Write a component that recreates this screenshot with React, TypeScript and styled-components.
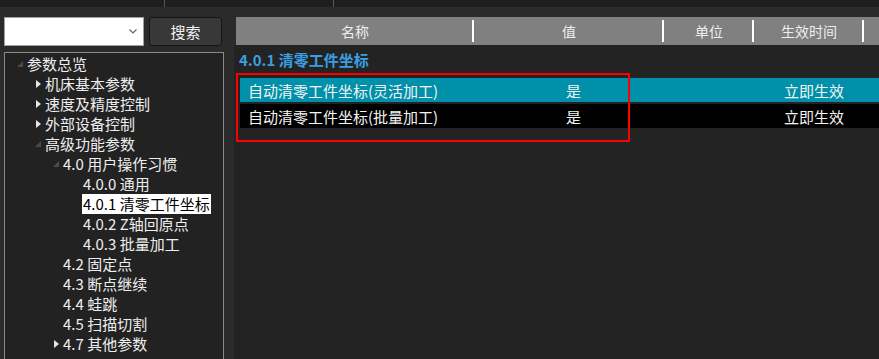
import * as React from 'react';
import styled, { createGlobalStyle } from 'styled-components';

const GlobalStyle = createGlobalStyle`
  html, body {
    margin: 0;
    padding: 0;
    background: #2b2b2b;
    font-family: "Noto Sans CJK SC", "Noto Sans", sans-serif;
    overflow: hidden;
  }
`;

const indents = [0, 18, 36, 56];

const Page = styled.div`
  width: 879px;
  height: 359px;
  display: flex;
  flex-direction: column;
  background: #2b2b2b;
  overflow: hidden;
`;

const TopStrip = styled.div`
  height: 7px;
  flex-shrink: 0;
  background: #1e1e1e;
  display: flex;
`;

const TopCell = styled.div<{ $w: number }>`
  width: ${p => p.$w}px;
  border-right: 1px solid #555;
`;

const Body = styled.div`
  flex: 1;
  display: flex;
  min-height: 0;
`;

const LeftPanel = styled.div`
  width: 234px;
  flex-shrink: 0;
  padding: 10px 0 0 4px;
  box-sizing: border-box;
  display: flex;
  flex-direction: column;
  gap: 6px;
`;

const SearchRow = styled.div`
  display: flex;
  gap: 5px;
  height: 29px;
`;

const Combo = styled.div`
  width: 140px;
  box-sizing: border-box;
  background: #fff;
  border: 1px solid #a0a0a0;
  display: flex;
  align-items: center;
  justify-content: flex-end;
  padding-right: 6px;
  color: #777;
`;

const SearchButton = styled.div`
  width: 73px;
  box-sizing: border-box;
  background: #383838;
  border: 1px solid #151515;
  border-radius: 3px;
  color: #f2f2f2;
  font-size: 15px;
  display: flex;
  align-items: center;
  justify-content: center;
`;

const TreeBox = styled.div`
  width: 220px;
  flex: 1;
  box-sizing: border-box;
  background: #222;
  border: 1px solid #8a8a8a;
  border-bottom: none;
  padding-top: 1px;
`;

const TreeRow = styled.div<{ $level: number }>`
  display: flex;
  align-items: center;
  height: 20px;
  padding-left: ${p => 9 + indents[p.$level]}px;
`;

const Expander = styled.span`
  width: 12px;
  height: 20px;
  flex-shrink: 0;
  display: flex;
  align-items: center;
  justify-content: center;
`;

const TreeLabel = styled.span<{ $selected?: boolean }>`
  font-size: 15px;
  line-height: 20px;
  white-space: nowrap;
  color: ${p => (p.$selected ? '#000' : '#eee')};
  background: ${p => (p.$selected ? '#fff' : 'transparent')};
  padding: 0 1px;
`;

const RightPanel = styled.div`
  flex: 1;
  padding-top: 10px;
  display: flex;
  flex-direction: column;
`;

const HeaderBar = styled.div`
  height: 28px;
  margin-left: 2px;
  background: #808080;
  display: flex;
  flex-shrink: 0;
`;

const HeaderCell = styled.div<{ $w: number }>`
  width: ${p => p.$w}px;
  flex-shrink: 0;
  display: flex;
  align-items: center;
  justify-content: center;
  color: #eee;
  font-size: 14px;
  position: relative;
  &::after {
    content: '';
    position: absolute;
    right: 0;
    top: 3px;
    bottom: 3px;
    width: 2px;
    background: #fff;
  }
`;

const Content = styled.div`
  flex: 1;
  background: #232323;
  padding: 5px 0 0 4px;
  position: relative;
`;

const GroupTitle = styled.div`
  color: #3a9ee0;
  font-weight: bold;
  font-size: 15px;
  line-height: 20px;
  height: 20px;
  padding-left: 1px;
`;

const Rows = styled.div`
  margin-top: 8px;
  margin-left: 2px;
  display: flex;
  flex-direction: column;
  gap: 2px;
`;

const Row = styled.div<{ $active?: boolean }>`
  height: 24px;
  display: flex;
  align-items: center;
  background: ${p => (p.$active ? '#0090a9' : '#000')};
  color: #f4f4f4;
  font-size: 15px;
`;

const Cell = styled.div<{ $w: number; $pad?: number }>`
  width: ${p => p.$w}px;
  padding-left: ${p => p.$pad ?? 0}px;
  box-sizing: border-box;
  flex-shrink: 0;
  white-space: nowrap;
`;

const Highlight = styled.div`
  position: absolute;
  left: 2px;
  top: 28px;
  width: 394px;
  height: 69px;
  box-sizing: border-box;
  border: 2px solid #f00;
  pointer-events: none;
`;

const Collapsed = () => (
  <svg width="5" height="8" viewBox="0 0 5 8">
    <path d="M0 0 L5 4 L0 8 Z" fill="#e6e6e6" />
  </svg>
);

const Expanded = () => (
  <svg width="6" height="6" viewBox="0 0 6 6">
    <path d="M6 0 L6 6 L0 6 Z" fill="#4a4a4a" />
  </svg>
);

type Node = { label: string; level: number; state?: 'open' | 'closed'; selected?: boolean };

const tree: Node[] = [
  { label: '参数总览', level: 0, state: 'open' },
  { label: '机床基本参数', level: 1, state: 'closed' },
  { label: '速度及精度控制', level: 1, state: 'closed' },
  { label: '外部设备控制', level: 1, state: 'closed' },
  { label: '高级功能参数', level: 1, state: 'open' },
  { label: '4.0 用户操作习惯', level: 2, state: 'open' },
  { label: '4.0.0 通用', level: 3 },
  { label: '4.0.1 清零工件坐标', level: 3, selected: true },
  { label: '4.0.2 Z轴回原点', level: 3 },
  { label: '4.0.3 批量加工', level: 3 },
  { label: '4.2 固定点', level: 2 },
  { label: '4.3 断点继续', level: 2 },
  { label: '4.4 蛙跳', level: 2 },
  { label: '4.5 扫描切割', level: 2 },
  { label: '4.7 其他参数', level: 2, state: 'closed' },
];

const columns = [
  { title: '名称', w: 238 },
  { title: '值', w: 190 },
  { title: '单位', w: 90 },
  { title: '生效时间', w: 110 },
];

const params = [
  { name: '自动清零工件坐标(灵活加工)', value: '是', when: '立即生效' },
  { name: '自动清零工件坐标(批量加工)', value: '是', when: '立即生效' },
];

export default function App() {
  return (
    <Page>
      <GlobalStyle />
      <TopStrip>
        <TopCell $w={164} />
        <TopCell $w={168} />
      </TopStrip>
      <Body>
        <LeftPanel>
          <SearchRow>
            <Combo>
              <svg width="8" height="5" viewBox="0 0 8 5">
                <path d="M0.5 0.5 L4 4 L7.5 0.5" stroke="#666" strokeWidth="1.2" fill="none" />
              </svg>
            </Combo>
            <SearchButton>搜索</SearchButton>
          </SearchRow>
          <TreeBox>
            {tree.map(n => (
              <TreeRow key={n.label} $level={n.level}>
                <Expander>
                  {n.state === 'open' ? <Expanded /> : n.state === 'closed' ? <Collapsed /> : null}
                </Expander>
                <TreeLabel $selected={n.selected}>{n.label}</TreeLabel>
              </TreeRow>
            ))}
          </TreeBox>
        </LeftPanel>
        <RightPanel>
          <HeaderBar>
            {columns.map(c => (
              <HeaderCell key={c.title} $w={c.w}>{c.title}</HeaderCell>
            ))}
          </HeaderBar>
          <Content>
            <GroupTitle>4.0.1 清零工件坐标</GroupTitle>
            <Rows>
              {params.map((p, i) => (
                <Row key={p.name} $active={i === 0}>
                  <Cell $w={326} $pad={8}>{p.name}</Cell>
                  <Cell $w={218}>{p.value}</Cell>
                  <Cell $w={90}>{p.when}</Cell>
                </Row>
              ))}
            </Rows>
            <Highlight />
          </Content>
        </RightPanel>
      </Body>
    </Page>
  );
}
